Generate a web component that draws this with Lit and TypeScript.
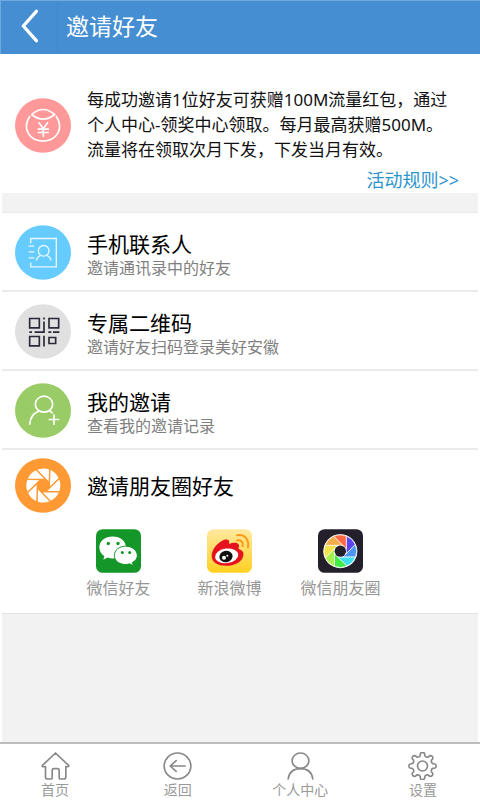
import { LitElement, html, svg, css } from "lit";
import { customElement } from "lit/decorators.js";

/* One blade of a camera shutter: two rim points, the arc between them, and the inner corner. */
function blade(k: number, cx: number, cy: number, R: number, r: number): string {
  const at = (deg: number, len: number) => {
    const a = (deg * Math.PI) / 180;
    return `${(cx + len * Math.cos(a)).toFixed(1)} ${(cy + len * Math.sin(a)).toFixed(1)}`;
  };
  const t = k * 45;
  return `M${at(t - 69, R)}A${R} ${R} 0 0 1 ${at(t - 24, R)}L${at(t + 22.5, r / Math.cos(Math.PI / 8))}Z`;
}

const shutter = (cx: number, cy: number, R: number, r: number, colors: string[], line: string, width: number) =>
  colors.map((c, k) => svg`<path d=${blade(k, cx, cy, R, r)} fill=${c} stroke=${line} stroke-width=${width}/>`);

const giftIcon = html`<svg class="disc" viewBox="44 55 168 164" aria-hidden="true">
  <ellipse cx="128" cy="137" rx="84" ry="82" fill="#ff9999"/>
  <g fill="none" stroke="#fff" stroke-width="5" stroke-linecap="round" stroke-linejoin="round">
    <path d="M88 110C64 147 88 184 128 184C168 184 192 147 168 110"/>
    <path d="M94 104Q128 74 163 104Q128 132 94 104Z"/>
    <path d="M116 129L129 147L142 129M129 147V170M114 148H144M114 158H144"/>
  </g></svg>`;

const contactIcon = html`<svg class="disc" viewBox="44 30 168 164" aria-hidden="true">
  <ellipse cx="128" cy="112" rx="84" ry="82" fill="#66ccff"/>
  <g fill="none" stroke="#e8f8ff" stroke-width="4">
    <path d="M91 84V70H168V155H91V142"/>
    <path d="M85 93H102M85 110H102M85 128H102"/>
    <ellipse cx="130" cy="107" rx="16" ry="16"/>
    <path d="M108 136Q110 125 120 121M140 121Q150 125 152 136"/>
  </g></svg>`;

const qrIcon = html`<svg class="disc" viewBox="44 268 168 164" aria-hidden="true">
  <ellipse cx="128" cy="350" rx="84" ry="82" fill="#e0e0e0"/>
  <g fill="none" stroke="#2b2938" stroke-width="5">
    <path d="M88 311H117V339H88ZM146 311H175V339H146ZM88 365H117V393H88ZM146 368H166V386H146Z"/>
    <path d="M131 308V314M131 320V352H103M87 352H95M144 352H153M158 352H177M131 363V395"/>
  </g></svg>`;

const inviteIcon = html`<svg class="disc" viewBox="44 56 168 164" aria-hidden="true">
  <ellipse cx="128" cy="138" rx="84" ry="82" fill="#99cc66"/>
  <g fill="none" stroke="#fff" stroke-width="5" stroke-linecap="round">
    <ellipse cx="131" cy="119" rx="26" ry="24"/>
    <path d="M88 179C90 158 99 146 115 140M147 138L156 145"/>
    <path d="M147 165H175M161 151V179"/>
  </g></svg>`;

const shutterIcon = html`<svg class="disc" viewBox="44 279 168 164" aria-hidden="true">
  <ellipse cx="128" cy="361" rx="84" ry="82" fill="#ff9933"/>
  ${shutter(129, 361, 53, 18, Array(8).fill("#fff"), "#ff9933", 4)}
  <circle cx="129" cy="361" r="17" fill="#ff9933"/></svg>`;

const wechatIcon = html`<svg class="tile" viewBox="48 43 135 131" aria-hidden="true">
  <rect x="48" y="43" width="135" height="131" rx="20" fill="#149628"/>
  <path d="M98 65C75 65 58 79 58 98C58 109 64 118 73 124L70 135L83 128Q90 131 98 131C121 131 138 117 138 98C138 79 121 65 98 65Z" fill="#fff"/>
  <circle cx="85" cy="86" r="5" fill="#149628"/><circle cx="114" cy="86" r="5" fill="#149628"/>
  <path d="M137 94C118 94 103 106 103 122C103 138 118 149 137 149Q143 149 149 147L160 153L157 143C167 138 172 131 172 122C172 106 156 94 137 94Z" fill="#fff" stroke="#149628" stroke-width="3"/>
  <circle cx="127" cy="113" r="4.5" fill="#149628"/><circle cx="149" cy="113" r="4.5" fill="#149628"/></svg>`;

const weiboIcon = html`<svg class="tile" viewBox="25 43 135 131" aria-hidden="true">
  <defs><linearGradient id="sun" x1="0" y1="0" x2="0" y2="1">
    <stop offset="0" stop-color="#ffe9a0"/><stop offset="1" stop-color="#ffd021"/></linearGradient></defs>
  <rect x="25" y="43" width="135" height="131" rx="20" fill="url(#sun)"/>
  <path d="M77 75C90 71 94 79 91 88C101 83 113 82 118 87C123 91 121 97 119 102C130 106 136 112 134 122C131 142 107 153 82 153C57 153 39 143 39 123C39 103 59 81 77 75Z" fill="#e6131f"/>
  <ellipse cx="84" cy="123" rx="35" ry="22" transform="rotate(-7 84 123)" fill="#fff"/>
  <ellipse cx="82" cy="125" rx="20" ry="17" transform="rotate(-15 82 125)" fill="#111"/>
  <circle cx="76" cy="129" r="6" fill="#fff"/><circle cx="86" cy="123" r="3" fill="#fff"/>
  <g fill="none" stroke="#ff9a1a" stroke-width="6" stroke-linecap="round">
    <path d="M115 77C127 74 135 82 132 94"/><path d="M115 61C138 57 152 74 148 97"/></g></svg>`;

const momentsIcon = html`<svg class="tile" viewBox="347 43 135 131" aria-hidden="true">
  <rect x="347" y="43" width="135" height="131" rx="20" fill="#231f2b"/>
  <circle cx="414" cy="109" r="51" fill="#fff"/>
  ${shutter(414, 109, 49, 18,
    ["#5a45f0", "#4a96f2", "#40e0ee", "#42ec48", "#a6f04c", "#f4e24a", "#f2ad4a", "#ff6a45"], "#fff", 2)}
  <circle cx="414" cy="109" r="17" fill="#231f2b"/></svg>`;

const gear = (() => {
  let d = "";
  for (let i = 0; i < 8; i++) {
    const p = (deg: number, len: number) => {
      const a = ((i * 45 - 90 + deg) * Math.PI) / 180;
      return `${(43 + len * Math.cos(a)).toFixed(1)} ${(42 + len * Math.sin(a)).toFixed(1)}`;
    };
    d += `${i ? "L" : "M"}${p(-12, 32)}Q${p(-11, 41)} ${p(0, 41)}Q${p(11, 41)} ${p(12, 32)}Q${p(22, 27)} ${p(33, 32)}`;
  }
  return d + "Z";
})();

const shares = [
  { label: "微信好友", icon: wechatIcon },
  { label: "新浪微博", icon: weiboIcon },
  { label: "微信朋友圈", icon: momentsIcon },
];

const rows = [
  { title: "手机联系人", note: "邀请通讯录中的好友", icon: contactIcon },
  { title: "专属二维码", note: "邀请好友扫码登录美好安徽", icon: qrIcon },
  { title: "我的邀请", note: "查看我的邀请记录", icon: inviteIcon },
];

const tabs = [
  { label: "首页", icon: svg`<path d="M43 3L3 41Q2 45 13 44V75Q13 81 19 81H30Q33 81 33 77V56Q33 50 38 50H49Q54 50 54 56V77Q54 81 57 81H68Q74 81 74 75V44Q84 45 83 41Z"/>` },
  { label: "返回", icon: svg`<ellipse cx="43" cy="42" rx="40" ry="39"/><path d="M66 42H22M39 26L21 42L39 58"/>` },
  { label: "个人中心", icon: svg`<ellipse cx="43" cy="26" rx="25" ry="23"/><path d="M6 81C9 60 24 50 43 50S77 60 80 81"/>` },
  { label: "设置", icon: svg`<path d=${gear}/><circle cx="43" cy="42" r="15"/>` },
];

@customElement("app-root")
export class AppRoot extends LitElement {
  static styles = css`
    :host {
      display: flex;
      flex-direction: column;
      min-height: 100vh;
      background: #fff;
      color: #111;
      font-family: "Noto Sans", "Noto Sans CJK SC", sans-serif;
    }
    a { color: inherit; text-decoration: none; }
    button { border: 0; padding: 0; background: none; font: inherit; color: inherit; cursor: pointer; }
    h1, h2, p { margin: 0; font-weight: 400; }
    svg { display: block; flex: none; }
    .bar {
      box-sizing: border-box;
      display: flex;
      align-items: center;
      height: 54px;
      background: #458ed2;
      border-top: 1px solid #6fa8dd;
      border-left: 1px solid #6fa8dd;
      color: #fff;
    }
    .back { width: 57px; height: 53px; padding-left: 19px; box-sizing: border-box; border-right: 1px solid #4189cc; }
    .back svg { width: 20px; height: 34px; margin-bottom: 4px; }
    .bar h1 { font-size: 23px; line-height: 30px; margin: 0 8px 4px; }
    main { flex: 1; margin: 0 2px; background: #f2f2f2; }
    section, .row { background: #fff; }
    .disc { width: 56px; height: 55px; }
    .tile { width: 45px; height: 44px; }
    .intro { display: flex; gap: 16px; padding: 33px 19px 0 13px; }
    .intro .disc { margin-top: 11px; }
    .words { flex: 1; font-size: 17px; line-height: 25px; }
    .words p { padding-right: 4px; }
    .rules { display: block; width: max-content; margin: 6px 0 0 auto; font-size: 18px; color: #2b95cd; }
    .list { margin-top: 19px; border-top: 1px solid #ececec; }
    .row {
      box-sizing: border-box;
      display: flex;
      gap: 16px;
      height: 79px;
      padding: 12px 13px 0;
      border-bottom: 2px solid #ebebeb;
    }
    .text { padding-top: 7px; }
    .name { font-size: 21px; line-height: 24px; color: #000; }
    .note { font-size: 16px; line-height: 24px; color: #808080; }
    .social { padding: 8px 0 14px; border-bottom: 1px solid #e2e2e2; }
    .lead { display: flex; align-items: center; gap: 16px; padding-left: 13px; }
    .shares { display: grid; grid-template-columns: repeat(3, 1fr); padding: 16px 82px 0 61px; }
    .share { display: flex; flex-direction: column; align-items: center; gap: 4px; font-size: 16px; line-height: 22px; color: #969696; }
    .tabs {
      display: flex;
      justify-content: space-between;
      padding: 8px 29px 0 27px;
      border-top: 2px solid #bdbdbd;
    }
    .tab { display: flex; flex-direction: column; align-items: center; width: 56px; font-size: 14px; line-height: 20px; color: #999; }
    .tab svg { width: 29px; height: 28px; fill: none; stroke: #888; stroke-width: 5; stroke-linejoin: round; stroke-linecap: round; }
  `;

  render() {
    return html`
      <header class="bar">
        <button class="back" aria-label="返回">
          <svg viewBox="60 22 60 102" fill="none" stroke="#fff" stroke-width="10" stroke-linecap="round" stroke-linejoin="round"><path d="M109 29L70 73L109 117"/></svg>
        </button>
        <h1>邀请好友</h1>
      </header>
      <main>
        <section class="intro">
          ${giftIcon}
          <div class="words">
            <p>每成功邀请1位好友可获赠100M流量红包，通过个人中心-领奖中心领取。每月最高获赠500M。流量将在领取次月下发，下发当月有效。</p>
            <a class="rules" href="#rules">活动规则&gt;&gt;</a>
          </div>
        </section>
        <div class="list">
          ${rows.map((r) => html`<a class="row" href="#">${r.icon}
            <div class="text"><h2 class="name">${r.title}</h2><p class="note">${r.note}</p></div></a>`)}
          <section class="social">
            <div class="lead">${shutterIcon}<h2 class="name">邀请朋友圈好友</h2></div>
            <div class="shares">
              ${shares.map((s) => html`<button class="share">${s.icon}<span>${s.label}</span></button>`)}
            </div>
          </section>
        </div>
      </main>
      <nav class="tabs">
        ${tabs.map((t) => html`<a class="tab" href="#"><svg viewBox="0 0 86 84" aria-hidden="true">${t.icon}</svg><span>${t.label}</span></a>`)}
      </nav>
    `;
  }
}
